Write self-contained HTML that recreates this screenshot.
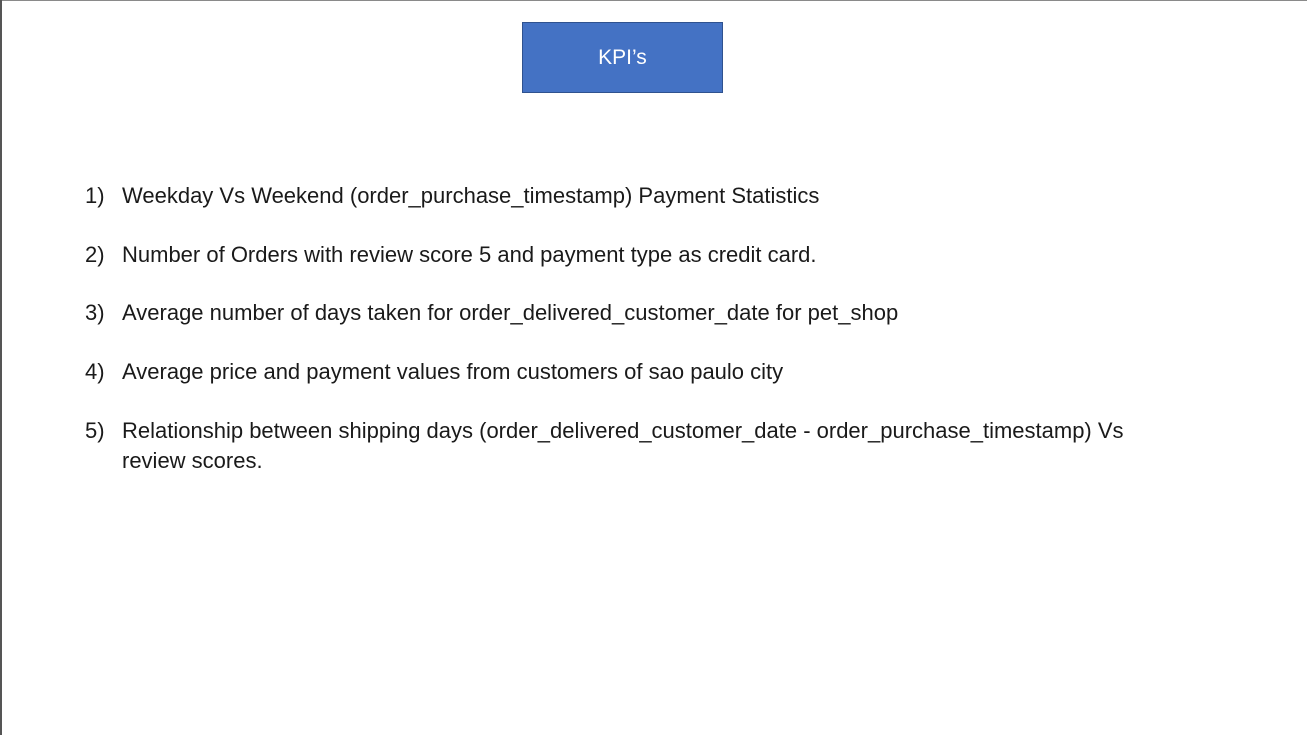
<!DOCTYPE html>
<html><head><style>
html,body{margin:0;padding:0;}
body{width:1307px;height:735px;background:#fff;position:relative;overflow:hidden;font-family:"Liberation Sans",sans-serif;color:#1a1a1a;}
.bt{position:absolute;left:0;top:0;width:1307px;height:1px;background:#8a8a8a;}
.bl{position:absolute;left:0;top:0;width:2px;height:735px;background:#555;}
.kpi{position:absolute;left:522px;top:22px;width:199px;height:69px;background:#4472c4;border:1px solid #2f528f;color:#fff;font-size:21px;display:flex;align-items:center;justify-content:center;}
.it{position:absolute;font-size:22px;line-height:30px;white-space:nowrap;}
.n{position:absolute;left:85px;}
.t{position:absolute;left:122px;}
</style></head><body>
<div class="bt"></div><div class="bl"></div>
<div class="kpi">KPI’s</div>
<div class="it" style="top:181px"><span class="n">1)</span><span class="t">Weekday Vs Weekend (order_purchase_timestamp) Payment Statistics</span></div>
<div class="it" style="top:240px"><span class="n">2)</span><span class="t">Number of Orders with review score 5 and payment type as credit card.</span></div>
<div class="it" style="top:298px"><span class="n">3)</span><span class="t">Average number of days taken for order_delivered_customer_date for pet_shop</span></div>
<div class="it" style="top:357px"><span class="n">4)</span><span class="t">Average price and payment values from customers of sao paulo city</span></div>
<div class="it" style="top:416px"><span class="n">5)</span><span class="t">Relationship between shipping days (order_delivered_customer_date - order_purchase_timestamp) Vs</span></div>
<div class="it" style="top:446px"><span class="t">review scores.</span></div>
</body></html>
